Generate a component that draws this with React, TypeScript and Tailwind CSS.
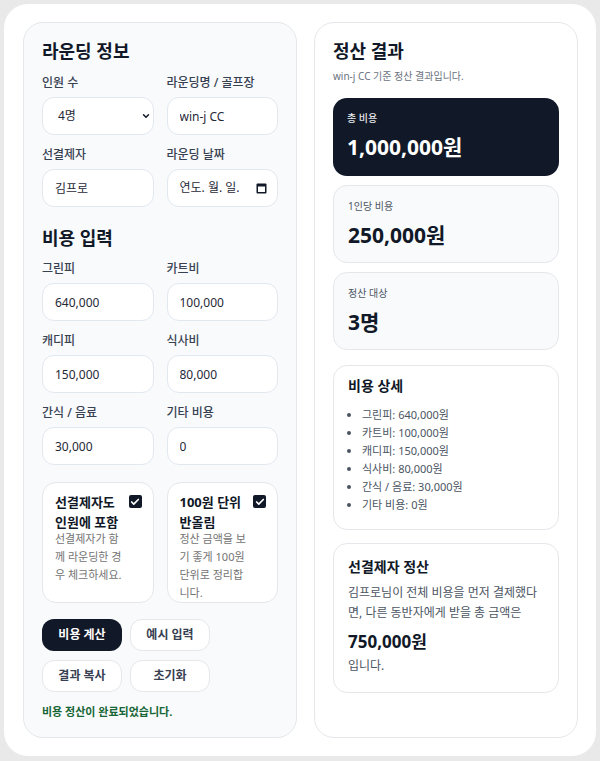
import { ChevronDown, Check } from 'lucide-react';

const font = { fontFamily: '"Noto Sans", "Noto Sans CJK KR", sans-serif' };

function Field({ label, value }: { label: string; value: string }) {
  return (
    <div className="flex flex-col">
      <label className="text-[12px] leading-[16px] font-medium text-[#374151]">{label}</label>
      <input
        readOnly
        value={value}
        className="mt-[6px] h-[38px] w-full rounded-[12px] border border-[#e2e8f0] bg-white px-[12px] text-[12px] text-[#1f2937] outline-none"
      />
    </div>
  );
}

function CheckCard({ title, desc }: { title: string; desc: string }) {
  return (
    <div className="h-[121px] rounded-[14px] border border-[#e5e7eb] bg-white pl-[12px] pr-[11px] pt-[9px]">
      <div className="flex items-start justify-between">
        <div className="w-[70px] text-[13px] font-bold leading-[20px] text-[#111827]">{title}</div>
        <span className="mt-[3px] flex h-[13px] w-[13px] items-center justify-center rounded-[2px] bg-[#111827]">
          <Check size={10} strokeWidth={4} className="text-white" />
        </span>
      </div>
      <p className="mt-[-2px] w-[68px] break-all text-[11px] leading-[18px] text-[#737373]">{desc}</p>
    </div>
  );
}

function Stat({ label, value, dark }: { label: string; value: string; dark?: boolean }) {
  return (
    <div
      className={
        dark
          ? 'h-[78px] rounded-[14px] bg-[#111827] px-[14px] pt-[12px] text-white'
          : 'h-[78px] rounded-[14px] border border-[#e5e7eb] bg-[#f8fafc] px-[14px] pt-[12px] text-[#111827]'
      }
    >
      <div className={dark ? 'text-[10px] leading-[16px] font-medium text-[#e5e7eb]' : 'text-[10px] leading-[16px] text-[#4b5563]'}>{label}</div>
      <div className="mt-[6px] text-[21px] font-bold leading-[30px]">{value}</div>
    </div>
  );
}

export default function App() {
  const details = [
    '그린피: 640,000원',
    '카트비: 100,000원',
    '캐디피: 150,000원',
    '식사비: 80,000원',
    '간식 / 음료: 30,000원',
    '기타 비용: 0원',
  ];

  return (
    <div className="min-h-screen bg-[#e9e9e9] p-[4px]" style={font}>
      <div className="h-[752px] rounded-[24px] bg-white pl-[19px] pt-[18px]">
        <div className="grid grid-cols-[274px_264px] gap-[17px]">
          {/* left: inputs */}
          <section className="h-[716px] rounded-[20px] border border-[#e5e7eb] bg-[#f8fafc] px-[18px] pt-[14px]">
            <h2 className="text-[18px] font-bold leading-[28px] text-[#111827]">라운딩 정보</h2>
            <div className="mt-[10px] grid grid-cols-2 gap-x-[13px] gap-y-[12px]">
              <div className="flex flex-col">
                <label className="text-[12px] leading-[16px] font-medium text-[#374151]">인원 수</label>
                <div className="relative mt-[6px]">
                  <select
                    defaultValue="4"
                    className="h-[38px] w-full appearance-none rounded-[12px] border border-[#e2e8f0] bg-white pl-[15px] text-[12px] text-[#1f2937] outline-none"
                  >
                    <option value="4">4명</option>
                  </select>
                  <ChevronDown size={10} strokeWidth={3.5} className="pointer-events-none absolute right-[3px] top-[14px] text-[#111827]" />
                </div>
              </div>
              <Field label="라운딩명 / 골프장" value="win-j CC" />
              <Field label="선결제자" value="김프로" />
              <div className="flex flex-col">
                <label className="text-[12px] leading-[16px] font-medium text-[#374151]">라운딩 날짜</label>
                <div className="mt-[6px] flex h-[38px] items-center justify-between rounded-[12px] border border-[#e2e8f0] bg-white pl-[12px] pr-[10px] text-[12px] text-[#1f2937]">
                  <span>연도. 월. 일.</span>
                  <svg width="11" height="12" viewBox="0 0 11 12">
                    <rect x="0.5" y="1.5" width="10" height="10" rx="1" fill="#111827" />
                    <rect x="2" y="4.5" width="7" height="5.5" fill="#ffffff" />
                  </svg>
                </div>
              </div>
            </div>

            <h2 className="mt-[17px] text-[18px] font-bold leading-[28px] text-[#111827]">비용 입력</h2>
            <div className="mt-[9px] grid grid-cols-2 gap-x-[13px] gap-y-[12px]">
              <Field label="그린피" value="640,000" />
              <Field label="카트비" value="100,000" />
              <Field label="캐디피" value="150,000" />
              <Field label="식사비" value="80,000" />
              <Field label="간식 / 음료" value="30,000" />
              <Field label="기타 비용" value="0" />
            </div>

            <div className="mt-[17px] grid grid-cols-2 gap-x-[13px]">
              <CheckCard title="선결제자도 인원에 포함" desc="선결제자가 함께 라운딩한 경우 체크하세요." />
              <CheckCard title="100원 단위 반올림" desc="정산 금액을 보기 좋게 100원 단위로 정리합니다." />
            </div>

            <div className="mt-[16px] flex w-[176px] flex-wrap gap-x-[8px] gap-y-[9px]">
              <button className="h-[32px] w-[80px] rounded-[12px] bg-[#111827] text-[12px] font-bold text-white">비용 계산</button>
              <button className="h-[32px] w-[80px] rounded-[12px] border border-[#e5e7eb] bg-white text-[12px] font-bold text-[#374151]">예시 입력</button>
              <button className="h-[32px] w-[80px] rounded-[12px] border border-[#e5e7eb] bg-white text-[12px] font-bold text-[#374151]">결과 복사</button>
              <button className="h-[32px] w-[80px] rounded-[12px] border border-[#e5e7eb] bg-white text-[12px] font-bold text-[#374151]">초기화</button>
            </div>
            <p className="mt-[11px] text-[11px] font-bold leading-[18px] text-[#166534]">비용 정산이 완료되었습니다.</p>
          </section>

          {/* right: results */}
          <section className="h-[716px] rounded-[20px] border border-[#e5e7eb] bg-white px-[18px] pt-[14px]">
            <h2 className="text-[18px] font-bold leading-[28px] text-[#111827]">정산 결과</h2>
            <p className="mt-[3px] text-[10px] leading-[16px] text-[#6b7280]">win-j CC 기준 정산 결과입니다.</p>
            <div className="mt-[14px] flex flex-col gap-[9px]">
              <Stat dark label="총 비용" value="1,000,000원" />
              <Stat label="1인당 비용" value="250,000원" />
              <Stat label="정산 대상" value="3명" />
            </div>

            <div className="mt-[15px] h-[165px] rounded-[14px] border border-[#e5e7eb] bg-white px-[14px] pt-[9px]">
              <h3 className="text-[14px] font-bold leading-[22px] text-[#111827]">비용 상세</h3>
              <ul className="mt-[9px] list-disc pl-[14px] text-[11px] leading-[18px] text-[#4b5563] marker:text-[#4b5563]">
                {details.map((d) => (
                  <li key={d}>{d}</li>
                ))}
              </ul>
            </div>

            <div className="mt-[13px] h-[150px] rounded-[14px] border border-[#e5e7eb] bg-white px-[14px] pt-[12px]">
              <h3 className="text-[14px] font-bold leading-[22px] text-[#111827]">선결제자 정산</h3>
              <p className="mt-[5px] text-[12px] leading-[20px] text-[#4b5563]">
                김프로님이 전체 비용을 먼저 결제했다면, 다른 동반자에게 받을 총 금액은
              </p>
              <div className="mt-[6px] text-[17px] font-bold leading-[26px] text-[#111827]">750,000원</div>
              <p className="mt-[1px] text-[12px] leading-[20px] text-[#4b5563]">입니다.</p>
            </div>
          </section>
        </div>
      </div>
    </div>
  );
}
